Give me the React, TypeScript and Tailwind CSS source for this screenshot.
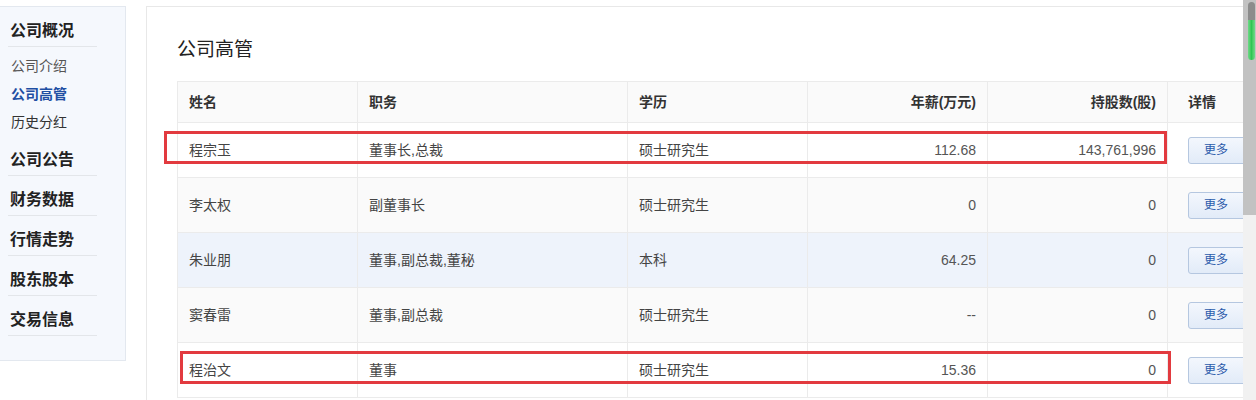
import React from "react";

const sideGroups = ["公司公告", "财务数据", "行情走势", "股东股本", "交易信息"];

const rows = [
  { name: "程宗玉", title: "董事长,总裁", edu: "硕士研究生", pay: "112.68", shares: "143,761,996", bg: "bg-white" },
  { name: "李太权", title: "副董事长", edu: "硕士研究生", pay: "0", shares: "0", bg: "bg-[#fafafa]" },
  { name: "朱业朋", title: "董事,副总裁,董秘", edu: "本科", pay: "64.25", shares: "0", bg: "bg-[#eef3fb]" },
  { name: "窦春雷", title: "董事,副总裁", edu: "硕士研究生", pay: "--", shares: "0", bg: "bg-[#fafafa]" },
  { name: "程治文", title: "董事", edu: "硕士研究生", pay: "15.36", shares: "0", bg: "bg-white" },
];

function Sidebar() {
  return (
    <aside className="flex-none w-[126px] h-[355px] border border-l-0 border-[#e3e8ef] bg-[#f5f8fd] pl-[8px]">
      <div className="w-[89px]">
        <div className="h-[40px] pt-[13px] leading-[22px] text-[16px] font-bold text-[#222] pl-[2px] border-b border-[#e3e6ea]">
          公司概况
        </div>
        <ul className="pt-[5px] text-[14px] pl-[3px]">
          <li className="h-[28px] leading-[28px] text-[#555]">公司介绍</li>
          <li className="h-[28px] leading-[28px] text-[#1f4fa3] font-bold">公司高管</li>
          <li className="h-[28px] leading-[28px] text-[#333]">历史分红</li>
        </ul>
        {sideGroups.map((g) => (
          <div
            key={g}
            className="h-[40px] pt-[13px] leading-[22px] text-[16px] font-bold text-[#222] pl-[2px] border-b border-[#e3e6ea]"
          >
            {g}
          </div>
        ))}
      </div>
    </aside>
  );
}

function MoreButton() {
  return (
    <button className="w-[60px] h-[27px] flex items-center justify-start pl-[15px] rounded-[3px] border border-[#b5c7e0] bg-linear-to-b from-[#f3f7fd] to-[#e2ebf8] text-[12px] text-[#2b5bab]">
      更多
    </button>
  );
}

function ExecTable() {
  const cell = "border border-[#ebebeb] px-[11px]";
  return (
    <table className="table-fixed border-collapse w-[1090px] text-[14px]">
      <colgroup>
        <col className="w-[180px]" />
        <col className="w-[270px]" />
        <col className="w-[180px]" />
        <col className="w-[180px]" />
        <col className="w-[180px]" />
        <col className="w-[100px]" />
      </colgroup>
      <thead>
        <tr className="bg-[#fafafa] h-[41px] text-[#333] font-bold">
          <th className={`${cell} text-left`}>姓名</th>
          <th className={`${cell} text-left`}>职务</th>
          <th className={`${cell} text-left`}>学历</th>
          <th className={`${cell} text-right`}>年薪(万元)</th>
          <th className={`${cell} text-right`}>持股数(股)</th>
          <th className={`${cell} text-left pl-[20px]`}>详情</th>
        </tr>
      </thead>
      <tbody>
        {rows.map((r) => (
          <tr key={r.name} className={`${r.bg} h-[55px] text-[#444]`}>
            <td className={cell}>{r.name}</td>
            <td className={cell}>{r.title}</td>
            <td className={cell}>{r.edu}</td>
            <td className={`${cell} text-right text-[#555]`}>{r.pay}</td>
            <td className={`${cell} text-right text-[#555]`}>{r.shares}</td>
            <td className={`${cell} pl-[20px]`}>
              <MoreButton />
            </td>
          </tr>
        ))}
      </tbody>
    </table>
  );
}

export default function App() {
  return (
    <div className="relative flex w-[1256px] h-[400px] overflow-hidden bg-white font-['Liberation_Sans','Noto_Sans_CJK_SC',sans-serif]">
      <div className="flex items-start w-[1243px] flex-none overflow-hidden pt-[6px]">
        <Sidebar />
        <main className="flex-none ml-[20px] w-[1150px] h-[420px] border border-[#e8e8e8] pl-[30px]">
          <h2 className="pt-[31px] mb-[19px] leading-[24px] text-[19px] text-[#222]">公司高管</h2>
          <ExecTable />
        </main>
      </div>

      {/* fake scrollbar */}
      <div className="flex flex-col w-[13px] flex-none">
        <div className="relative h-[215px] bg-[#c2c2c2]">
          <div className="absolute left-[5px] top-[2px] w-[7px] h-[58px] rounded-full overflow-hidden flex flex-col">
            <div className="h-[18px] bg-[#8c8c8c]" />
            <div className="flex-1 bg-linear-to-r from-[#6fd889] via-[#2fc653] to-[#6fd889]" />
          </div>
        </div>
        <div className="flex-1 bg-[#f1f1f1]" />
      </div>

      {/* red annotation boxes */}
      <div className="absolute left-[164px] top-[131px] w-[1003px] h-[33px] border-[3px] border-[#e23a3f]" />
      <div className="absolute left-[180px] top-[351px] w-[991px] h-[33px] border-[3px] border-[#e23a3f]" />
    </div>
  );
}
